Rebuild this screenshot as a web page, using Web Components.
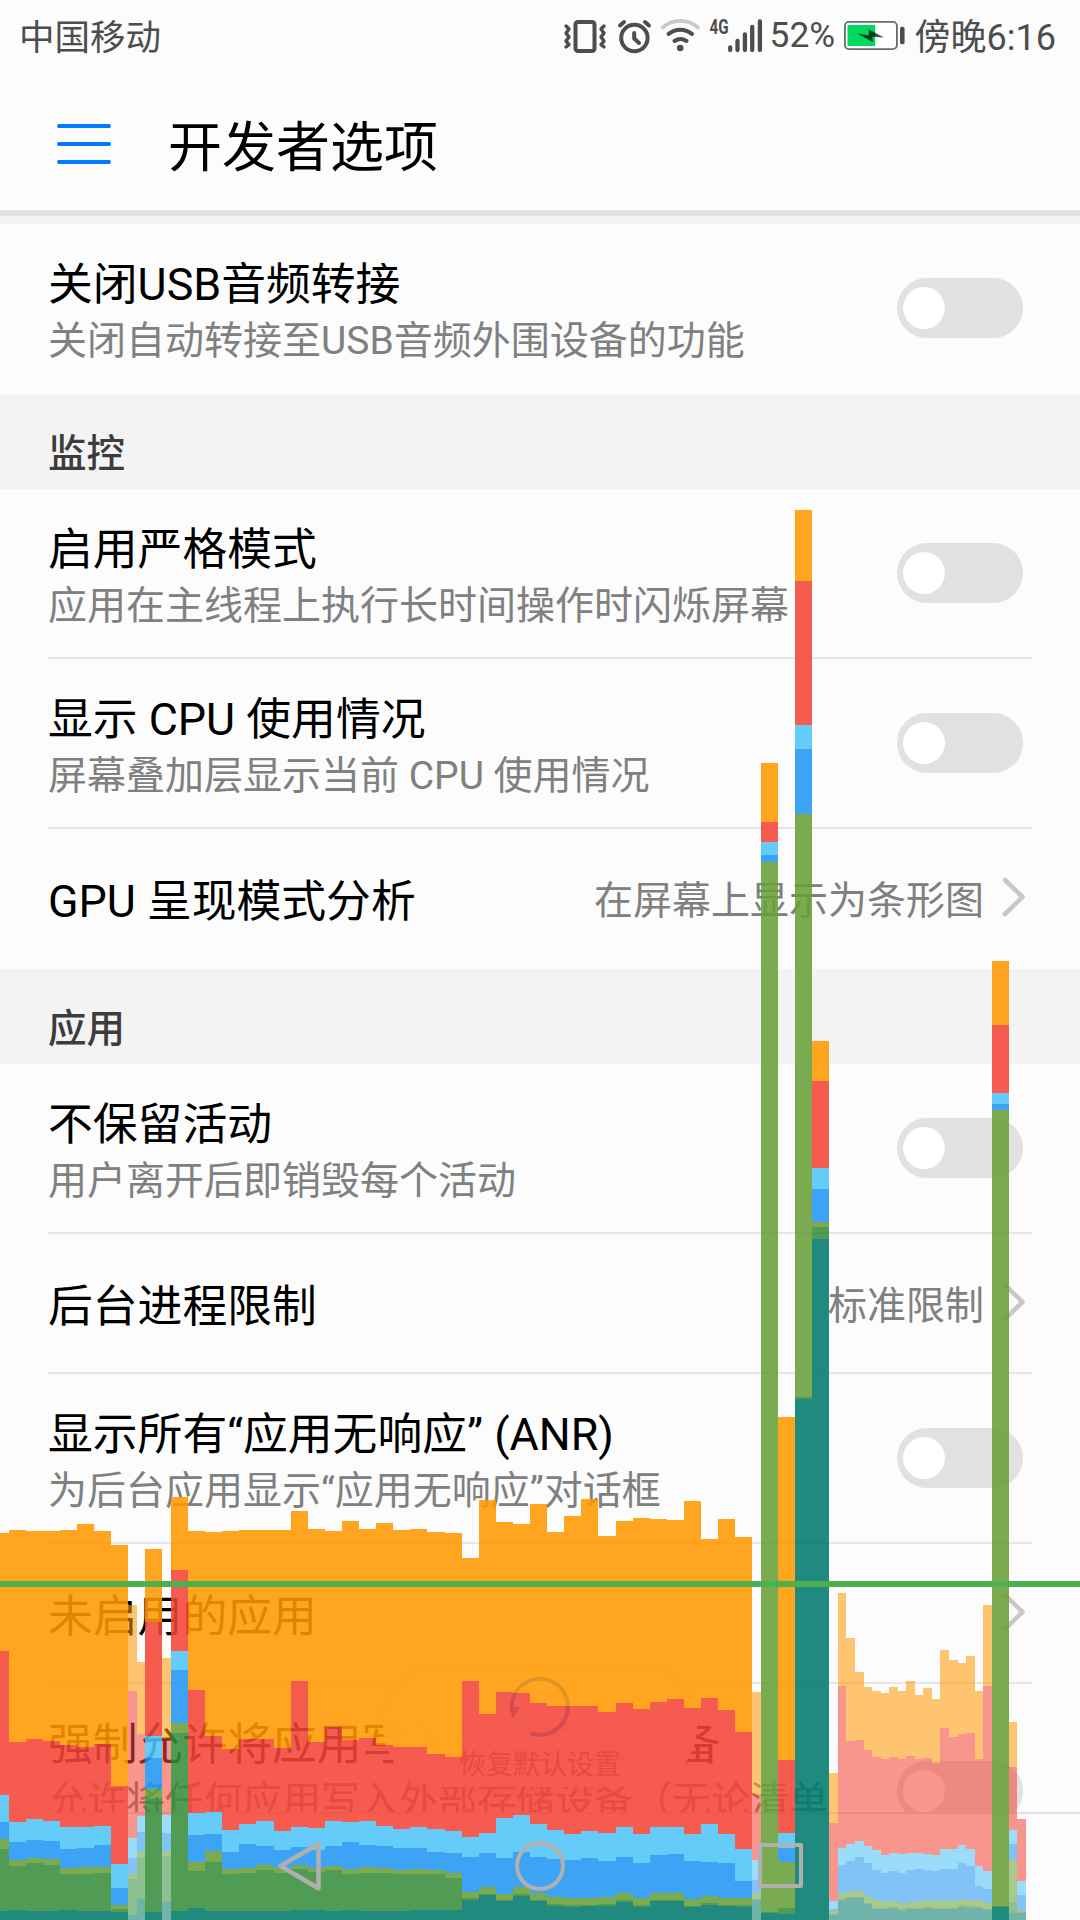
<!DOCTYPE html>
<html lang="zh-CN">
<head>
<meta charset="utf-8">
<title>开发者选项</title>
<style>
  html, body { margin: 0; padding: 0; }
  body {
    width: 1080px;
    height: 1920px;
    overflow: hidden;
    background: #fcfcfc;
    font-family: Roboto, "Noto Sans CJK SC", sans-serif;
    color: #000;
  }
</style>
</head>
<body>
<settings-screen>
  <status-bar slot="top" carrier="中国移动" battery="52%" time="傍晚6:16"></status-bar>
  <title-bar slot="top">开发者选项</title-bar>

  <setting-row toggle>关闭USB音频转接<span slot="summary">关闭自动转接至USB音频外围设备的功能</span></setting-row>
  <section-header>监控</section-header>
  <setting-row toggle divider>启用严格模式<span slot="summary">应用在主线程上执行长时间操作时闪烁屏幕</span></setting-row>
  <setting-row toggle divider>显示 CPU 使用情况<span slot="summary">屏幕叠加层显示当前 CPU 使用情况</span></setting-row>
  <setting-row link>GPU 呈现模式分析<span slot="value">在屏幕上显示为条形图</span></setting-row>
  <section-header>应用</section-header>
  <setting-row toggle divider>不保留活动<span slot="summary">用户离开后即销毁每个活动</span></setting-row>
  <setting-row link divider>后台进程限制<span slot="value">标准限制</span></setting-row>
  <setting-row toggle divider>显示所有“应用无响应” (ANR)<span slot="summary">为后台应用显示“应用无响应”对话框</span></setting-row>
  <setting-row link divider>未启用的应用</setting-row>
  <setting-row toggle tall>强制允许将应用写入外部存储设备<span slot="summary">允许将任何应用写入外部存储设备（无论清单</span></setting-row>

  <reset-button slot="overlay">恢复默认设置</reset-button>
  <gpu-profile slot="overlay"></gpu-profile>
  <nav-bar slot="overlay"></nav-bar>
</settings-screen>

<script>
class SettingsScreen extends HTMLElement {
  constructor() {
    super();
    this.attachShadow({ mode: 'open' });
    this.shadowRoot.innerHTML = `
      <style>
        :host {
          display: flex;
          flex-direction: column;
          position: relative;
          width: 1080px;
          height: 1920px;
          overflow: hidden;
        }
        .list {
          flex: none;
          height: 1588px;
          overflow: hidden;
          border-top: 8px solid #f3f3f3;
          box-sizing: content-box;
        }
        .foot { flex: 1; border-top: 2px solid #e0e0e0; }
      </style>
      <slot name="top"></slot>
      <div class="list"><slot></slot></div>
      <div class="foot"></div>
      <slot name="overlay"></slot>
    `;
  }
}

class StatusBar extends HTMLElement {
  connectedCallback() {
    this.attachShadow({ mode: 'open' });
    this.shadowRoot.innerHTML = `
      <style>
        :host {
          display: flex;
          flex: none;
          justify-content: space-between;
          height: 74px;
          padding: 0 24px 0 19px;
          box-sizing: border-box;
          color: #4d4d4d;
          font-size: 36px;
          line-height: 76px;
          white-space: nowrap;
        }
        .carrier { font-size: 35.5px; line-height: 77px; }
        .right { display: flex; }
        .battery { font-size: 35.3px; line-height: 70px; width: 66px; margin-right: 7px; }
        .time { margin-left: 9px; }
        svg { display: block; }
        svg text { font: 700 20.5px Roboto, sans-serif; }
      </style>
      <span class="carrier">${this.getAttribute('carrier')}</span>
      <div class="right">
        <svg width="209" height="74" viewBox="561 0 209 74" fill="none" stroke="#4d4d4d" stroke-width="4" stroke-linecap="round" stroke-linejoin="round">
          <rect x="575.5" y="22" width="19" height="29" rx="2.5"/>
          <g stroke-width="3.4">
            <path d="M566 26l3 3-3 4.200 3 3.700-3 4.200 3 3.600-3 2.300"/>
            <path d="M604 26l-3 3 3 4.200-3 3.700 3 4.200-3 3.600 3 2.300"/>
          </g>
          <circle cx="634.400" cy="38" r="13.200"/>
          <path d="M634.200 33v5.500l4.800 4.500M620 25.500l4-3.400M649 25.500l-4-3.400"/>
          <path d="M662.500 27.500a27 27 0 0 1 35.500 0" stroke="#c8c8c8" stroke-width="3.600"/>
          <path d="M668.500 34a18 18 0 0 1 23.500 0M674.500 41a11 11 0 0 1 12 0"/>
          <circle cx="680.200" cy="48" r="3.300" fill="#4d4d4d" stroke="none"/>
          <path d="M730.200 47.500v2.600M737.500 41v9.100M744.900 34.500v15.600M752.200 27v23.100M759.900 21.500v28.600" stroke-width="4.300"/>
          <text x="709.500" y="34" fill="#4d4d4d" stroke="none" textLength="19" lengthAdjust="spacingAndGlyphs">4G</text>
        </svg>
        <span class="battery">${this.getAttribute('battery')}</span>
        <svg width="63" height="74" viewBox="843 0 63 74">
          <rect x="844.900" y="21.900" width="52" height="27.200" rx="4" fill="#fff" stroke="#6a6a6a" stroke-width="1.800"/>
          <rect x="847.500" y="25" width="27.700" height="21" fill="#00d95f"/>
          <path d="M857.300 33.500l11.500 2-.3-6.200 15.500 8.200-11.700-.7.800 5.400z" fill="#000" fill-opacity=".7"/>
          <rect x="900" y="26.700" width="4.600" height="17.600" rx="2" fill="#4d4d4d"/>
        </svg>
        <span class="time">${this.getAttribute('time')}</span>
      </div>
    `;
  }
}

class TitleBar extends HTMLElement {
  constructor() {
    super();
    this.attachShadow({ mode: 'open' });
    this.shadowRoot.innerHTML = `
      <style>
        :host {
          display: flex;
          flex: none;
          align-items: center;
          height: 142px;
          padding-left: 57px;
          box-sizing: border-box;
          border-bottom: 6px solid #e1e1e1;
          font-size: 54px;
          line-height: 122px;
        }
        .menu { display: flex; flex-direction: column; gap: 14px; width: 54px; margin: 3px 57px 0 0; }
        .menu i { height: 4px; border-radius: 2px; background: #007dff; }
        .title { padding-top: 14px; }
      </style>
      <div class="menu"><i></i><i></i><i></i></div>
      <div class="title"><slot></slot></div>
    `;
  }
}

class SectionHeader extends HTMLElement {
  constructor() {
    super();
    this.attachShadow({ mode: 'open' });
    this.shadowRoot.innerHTML = `
      <style>
        :host {
          display: block;
          height: 95px;
          padding: 35px 48px 0;
          box-sizing: border-box;
          background: #f3f3f3;
          color: #3c3c3c;
          font-size: 38.5px;
          font-weight: 500;
          line-height: 50px;
        }
      </style>
      <slot></slot>
    `;
  }
}

class SwitchToggle extends HTMLElement {
  constructor() {
    super();
    this.attachShadow({ mode: 'open' });
    this.shadowRoot.innerHTML = `
      <style>
        :host {
          display: block;
          flex: none;
          width: 126px;
          height: 60px;
          padding: 9px 6px;
          box-sizing: border-box;
          border-radius: 30px;
          background: #e1e1e1;
        }
        .knob { width: 42px; height: 42px; border-radius: 50%; background: #fff; }
      </style>
      <div class="knob"></div>
    `;
  }
}

class SettingRow extends HTMLElement {
  connectedCallback() {
    this.attachShadow({ mode: 'open' });
    const end = this.hasAttribute('toggle')
      ? '<switch-toggle></switch-toggle>'
      : `<div class="value"><slot name="value"></slot></div>
         <svg width="24" height="40" viewBox="0 0 24 40" fill="none" stroke="#c8c8c8" stroke-width="4.600" stroke-linecap="round" stroke-linejoin="round">
           <path d="M3 3l17.500 17L3 37"/>
         </svg>`;
    this.shadowRoot.innerHTML = `
      <style>
        :host { display: block; height: 170px; padding: 0 48px; box-sizing: border-box; }
        :host([link]) { height: 140px; }
        :host([tall]) { height: 216px; }
        .row {
          display: flex;
          align-items: center;
          height: 100%;
          padding-right: 9px;
          box-sizing: border-box;
          border-bottom: 2px solid transparent;
        }
        :host([divider]) .row { border-color: #e6e6e6; }
        :host([link]) .row { padding-right: 6px; }
        .text { flex: 1; white-space: nowrap; min-width: 0; padding-top: 8px; }
        :host([link]) .text { padding-top: 7px; }
        .title { font-size: 44.800px; line-height: 58px; }
        .summary { font-size: 39px; line-height: 54px; color: #808080; }
        :host([tall]) .summary { height: 100px; }
        :host([link]) .summary { display: none; }
        .value { font-size: 39px; line-height: 54px; color: #808080; margin-right: 18px; padding-top: 6px; }
        svg { display: block; flex: none; margin-top: -2px; }
      </style>
      <div class="row">
        <div class="text">
          <div class="title"><slot></slot></div>
          <div class="summary"><slot name="summary"></slot></div>
        </div>
        ${end}
      </div>
    `;
  }
}

class ResetButton extends HTMLElement {
  constructor() {
    super();
    this.attachShadow({ mode: 'open' });
    this.shadowRoot.innerHTML = `
      <style>
        :host {
          position: absolute;
          left: 383px;
          top: 1668px;
          display: flex;
          flex-direction: column;
          align-items: center;
          width: 314px;
          height: 119px;
          padding-top: 7px;
          box-sizing: border-box;
          border-radius: 60px;
          background: rgba(252, 252, 252, 0.94);
          box-shadow: 0 2px 14px rgba(0, 0, 0, 0.14);
          color: #808080;
          font-size: 27px;
          line-height: 36px;
        }
        svg { display: block; flex: none; margin-bottom: 8px; }
      </style>
      <svg width="64" height="64" viewBox="508 1675 64 64" fill="none" stroke="#007dff" stroke-width="4" stroke-linecap="round">
        <path d="M512.200 1711A28 28 0 1 1 532 1733.600"/>
        <path d="M510 1706.500l10 .8-7.500 11.500z" fill="#007dff" stroke="none"/>
      </svg>
      <slot></slot>
    `;
  }
}

class NavBar extends HTMLElement {
  constructor() {
    super();
    this.attachShadow({ mode: 'open' });
    this.shadowRoot.innerHTML = `
      <style>
        :host {
          position: absolute;
          left: 0;
          bottom: 0;
          display: flex;
          justify-content: center;
          gap: 180px;
          width: 1080px;
          height: 80px;
        }
        svg { display: block; flex: none; }
      </style>
      <svg width="60" height="54" viewBox="0 0 60 54" fill="none" stroke="#b0b0b0" stroke-width="4.500" stroke-linejoin="round"><path d="M10.500 26L48.500 3.700v44.600z"/></svg>
      <svg width="60" height="54" viewBox="0 0 60 54" fill="none" stroke="#b0b0b0" stroke-width="4"><circle cx="30" cy="26" r="23"/></svg>
      <svg width="60" height="54" viewBox="0 0 60 54" fill="none" stroke="#b0b0b0" stroke-width="4" stroke-linejoin="round"><rect x="10" y="5" width="41" height="41"/></svg>
    `;
  }
}

// Stages from top to bottom of every bar.
const STAGES = ['#ff9800', '#f44336', '#4fc3f7', '#2196f3', '#689f38', '#388e3c', '#00796b'];
const TIERS = { full: 0.875, dim: 0.56 };

// [x, width, tops of the seven stages]. Tops are thirds of a pixel below y = 1480.
const FRAMES = [
  [0, 9, 159, 513, 945, 1026, 1077, 1107, 1293],
  [9, 17, 150, 786, 1026, 1086, 1140, 1158, 1290],
  [26, 17, 153, 777, 1017, 1080, 1134, 1149, 1293],
  [43, 17, 153, 783, 1023, 1083, 1137, 1155, 1293],
  [60, 17, 150, 795, 1041, 1107, 1164, 1182, 1290],
  [77, 17, 132, 801, 1041, 1104, 1161, 1182, 1293],
  [94, 17, 153, 792, 1038, 1095, 1161, 1179, 1293],
  [111, 17, 195, 918, 1152, 1224, 1275, 1287, 1296],
  [145, 17, 207, 426, 768, 834, 927, 954, 1296],
  [171, 17, 51, 270, 513, 570, 729, 759, 1293],
  [188, 17, 153, 630, 999, 1065, 1146, 1173, 1284],
  [205, 17, 156, 768, 996, 1062, 1113, 1146, 1293],
  [222, 17, 153, 807, 1050, 1116, 1167, 1182, 1293],
  [239, 17, 150, 777, 1032, 1092, 1164, 1179, 1293],
  [256, 18, 150, 777, 1023, 1098, 1155, 1170, 1293],
  [274, 17, 150, 804, 1053, 1110, 1164, 1179, 1293],
  [291, 17, 93, 603, 1041, 1101, 1155, 1167, 1290],
  [308, 17, 147, 786, 1044, 1110, 1164, 1176, 1290],
  [325, 17, 153, 741, 1023, 1098, 1158, 1170, 1293],
  [342, 17, 123, 780, 1026, 1086, 1167, 1182, 1290],
  [359, 17, 147, 774, 1023, 1095, 1161, 1179, 1293],
  [376, 17, 129, 795, 1038, 1098, 1164, 1179, 1293],
  [393, 17, 150, 801, 1047, 1104, 1170, 1182, 1293],
  [410, 17, 147, 801, 1041, 1104, 1167, 1182, 1290],
  [427, 18, 156, 822, 1047, 1116, 1170, 1182, 1290],
  [445, 17, 159, 831, 1053, 1119, 1179, 1194, 1290],
  [462, 17, 234, 603, 1071, 1131, 1236, 1254, 1260],
  [479, 17, 60, 702, 1059, 1119, 1221, 1242, 1245],
  [496, 17, 126, 636, 1014, 1134, 1242, 1260, 1263],
  [513, 17, 132, 639, 1005, 1116, 1221, 1242, 1248],
  [530, 17, 72, 669, 1032, 1131, 1239, 1260, 1263],
  [547, 17, 156, 678, 1050, 1137, 1251, 1272, 1278],
  [564, 17, 108, 678, 1062, 1140, 1254, 1275, 1281],
  [581, 17, 57, 678, 1053, 1134, 1254, 1275, 1278],
  [598, 18, 168, 696, 1059, 1143, 1251, 1272, 1278],
  [616, 17, 123, 669, 1041, 1131, 1239, 1260, 1266],
  [633, 17, 114, 687, 1062, 1149, 1254, 1275, 1281],
  [650, 17, 117, 666, 1041, 1125, 1239, 1260, 1263],
  [667, 17, 120, 657, 1041, 1122, 1239, 1260, 1263],
  [684, 17, 63, 684, 1062, 1143, 1257, 1278, 1281],
  [701, 17, 177, 654, 1032, 1146, 1248, 1269, 1275],
  [718, 17, 117, 690, 1062, 1149, 1254, 1275, 1278],
  [735, 17, 171, 756, 1107, 1203, 1254, 1275, 1281],
  [761, 17, -2151, -1974, -1914, -1875, -1854, 1296, 1299],
  [778, 17, -189, 840, 1059, 1104, 1146, 1284, 1302],
  [795, 17, -2910, -2697, -2265, -2193, -1998, -249, -243],
  [812, 17, -1317, -1197, -936, -873, -774, -759, -723],
  [992, 17, -1557, -1365, -1161, -1128, -1110, 1278, 1281],
];

const DIM_FRAMES = [
  [128, 9, 375, 633, 1074, 1134, 1182, 1197, 1305],
  [137, 8, 546, 762, 1008, 1056, 1116, 1131, 1257],
  [162, 9, 534, 777, 1005, 1059, 1113, 1128, 1266],
  [752, 9, 636, 942, 1140, 1200, 1239, 1257, 1260],
  [829, 9, 879, 1029, 1263, 1287, 1293, 1302, 1305],
  [838, 8, 339, 618, 1104, 1155, 1239, 1257, 1263],
  [846, 9, 474, 783, 1092, 1143, 1233, 1251, 1254],
  [855, 9, 576, 780, 1083, 1131, 1233, 1251, 1254],
  [864, 8, 621, 810, 1098, 1149, 1248, 1269, 1272],
  [872, 9, 633, 831, 1110, 1170, 1260, 1284, 1287],
  [881, 8, 639, 837, 1125, 1179, 1266, 1284, 1287],
  [889, 9, 621, 831, 1119, 1173, 1263, 1281, 1284],
  [898, 8, 633, 837, 1122, 1179, 1269, 1287, 1293],
  [906, 9, 603, 828, 1119, 1170, 1266, 1284, 1287],
  [915, 8, 645, 837, 1119, 1167, 1263, 1284, 1287],
  [923, 9, 624, 834, 1122, 1170, 1260, 1281, 1284],
  [932, 8, 657, 849, 1125, 1173, 1263, 1284, 1287],
  [940, 9, 510, 744, 1107, 1167, 1263, 1284, 1287],
  [949, 9, 540, 771, 1107, 1167, 1263, 1284, 1287],
  [958, 8, 549, 762, 1095, 1149, 1257, 1275, 1281],
  [966, 9, 528, 759, 1107, 1158, 1260, 1278, 1284],
  [975, 8, 633, 837, 1158, 1218, 1260, 1281, 1284],
  [983, 9, 375, 618, 1173, 1227, 1269, 1287, 1290],
  [1009, 8, 726, 861, 1050, 1092, 1140, 1266, 1299],
  [1017, 9, 1017, 1017, 1203, 1245, 1290, 1296, 1299],
];

class GpuProfile extends HTMLElement {
  constructor() {
    super();
    this.attachShadow({ mode: 'open' });
    this.shadowRoot.innerHTML = `
      <style>
        :host { position: absolute; left: 0; top: 0; display: block; width: 1080px; height: 1920px; pointer-events: none; }
        svg { display: block; }
      </style>
      <svg width="1080" height="1920" shape-rendering="crispEdges">
        <g fill-opacity="${TIERS.dim}">${DIM_FRAMES.map((f) => this.bar(f)).join('')}</g>
        <g fill-opacity="${TIERS.full}">${FRAMES.map((f) => this.bar(f)).join('')}</g>
        <rect x="0" y="1581" width="1080" height="6" fill="#4caf50"/>
      </svg>
    `;
  }

  bar([x, width, ...tops]) {
    const ys = tops.map((t) => 1480 + Math.round(t / 3)).concat(1920);
    return STAGES.map((color, i) => {
      const height = ys[i + 1] - ys[i];
      return height > 0 ? `<rect x="${x}" y="${ys[i]}" width="${width}" height="${height}" fill="${color}"/>` : '';
    }).join('');
  }
}

customElements.define('settings-screen', SettingsScreen);
customElements.define('status-bar', StatusBar);
customElements.define('title-bar', TitleBar);
customElements.define('section-header', SectionHeader);
customElements.define('switch-toggle', SwitchToggle);
customElements.define('setting-row', SettingRow);
customElements.define('reset-button', ResetButton);
customElements.define('nav-bar', NavBar);
customElements.define('gpu-profile', GpuProfile);
</script>
</body>
</html>
